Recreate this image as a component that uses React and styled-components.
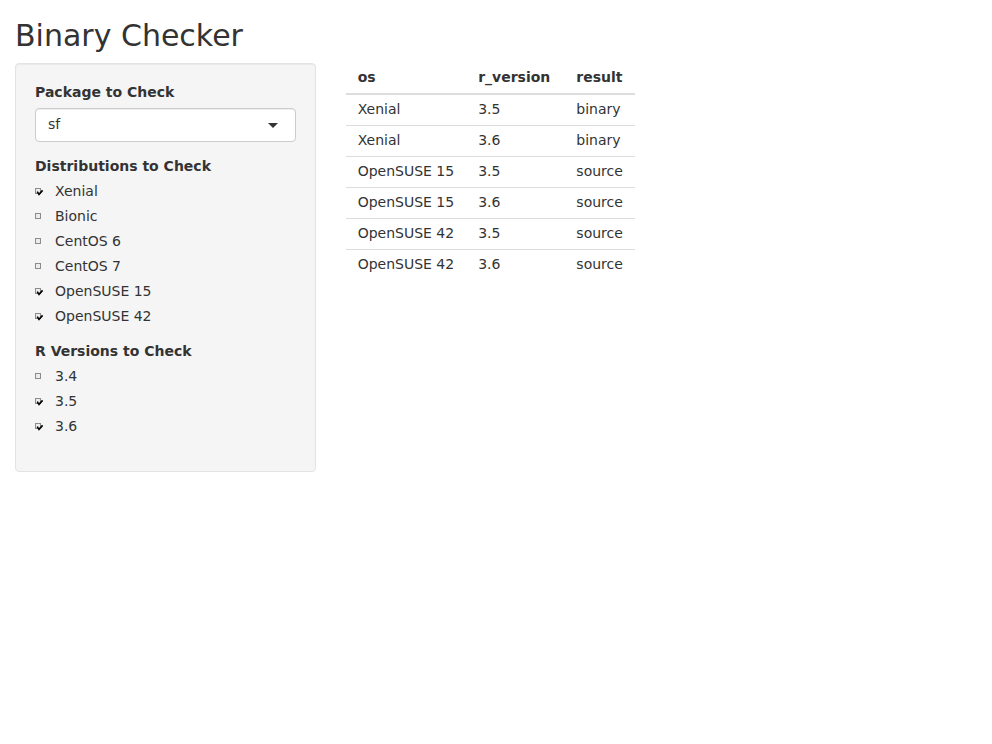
import styled, { createGlobalStyle } from "styled-components";

const GlobalStyle = createGlobalStyle`
  * {
    box-sizing: border-box;
  }
  body {
    margin: 0;
    font-family: "DejaVu Sans", sans-serif;
    font-size: 14px;
    line-height: 1.42857143;
    color: #333;
    background: #fff;
  }
`;

const Page = styled.div`
  padding: 0 15px;
`;

const Title = styled.h2`
  margin: 19px 0 11px;
  font-size: 30px;
  font-weight: 500;
  line-height: 1.1;
`;

const Row = styled.div`
  display: grid;
  grid-template-columns: 300.67px 1fr;
  gap: 30px;
  align-items: start;
`;

const Well = styled.div`
  background: #f5f5f5;
  border: 1px solid #e3e3e3;
  border-radius: 4px;
  box-shadow: inset 0 1px 1px rgba(0, 0, 0, 0.05);
  padding: 19px;
  margin-bottom: 20px;
`;

const FormGroup = styled.div`
  margin-bottom: 15px;
`;

const Label = styled.label`
  display: block;
  font-weight: 700;
  height: 20px;
  line-height: 18px;
  margin-bottom: 5px;
`;

const SelectBox = styled.div`
  position: relative;
  height: 34px;
  padding: 5px 12px 7px;
  background: #fff;
  border: 1px solid #ccc;
  border-radius: 4px;
  box-shadow: inset 0 1px 1px rgba(0, 0, 0, 0.075);
  &::after {
    content: "";
    position: absolute;
    right: 17px;
    top: 14px;
    border-style: solid;
    border-width: 5px 5px 0 5px;
    border-color: #333 transparent transparent transparent;
  }
`;

const Options = styled.div`
  display: flex;
  flex-direction: column;
  gap: 5px;
`;

const Option = styled.label`
  display: flex;
  align-items: flex-start;
  height: 20px;
  line-height: 18px;
`;

const Box = styled.span`
  display: inline-flex;
  width: 20px;
  height: 20px;
  padding-top: 6px;
`;

const Check = ({ checked }) => (
  <Box>
    <svg width="9" height="9" viewBox="0 0 9 9">
      <rect x="0.5" y="0.5" width="5" height="5" fill="#ececec" stroke="#8c8c8c" />
      {checked && (
        <path d="M2.2 3.6 L4 6.4 L7.6 2.4" fill="none" stroke="#000" strokeWidth="1.6" />
      )}
    </svg>
  </Box>
);

const Table = styled.table`
  border-collapse: collapse;
  border-spacing: 0;
`;

const Th = styled.th`
  text-align: left;
  font-weight: 700;
  padding: 4px ${(p) => (p.$wide ? 14 : 12)}px 6px 12px;
  border-bottom: 2px solid #ddd;
  white-space: nowrap;
`;

const Td = styled.td`
  padding: 4px 12px 6px;
  border-top: 1px solid ${(p) => (p.$first ? "transparent" : "#ddd")};
  white-space: nowrap;
`;

const distros = [
  { name: "Xenial", checked: true },
  { name: "Bionic", checked: false },
  { name: "CentOS 6", checked: false },
  { name: "CentOS 7", checked: false },
  { name: "OpenSUSE 15", checked: true },
  { name: "OpenSUSE 42", checked: true },
];

const versions = [
  { name: "3.4", checked: false },
  { name: "3.5", checked: true },
  { name: "3.6", checked: true },
];

const results = [
  ["Xenial", "3.5", "binary"],
  ["Xenial", "3.6", "binary"],
  ["OpenSUSE 15", "3.5", "source"],
  ["OpenSUSE 15", "3.6", "source"],
  ["OpenSUSE 42", "3.5", "source"],
  ["OpenSUSE 42", "3.6", "source"],
];

const CheckGroup = ({ label, items }) => (
  <FormGroup>
    <Label>{label}</Label>
    <Options>
      {items.map((item) => (
        <Option key={item.name}>
          <Check checked={item.checked} />
          {item.name}
        </Option>
      ))}
    </Options>
  </FormGroup>
);

export default function App() {
  return (
    <Page>
      <GlobalStyle />
      <Title>Binary Checker</Title>
      <Row>
        <Well>
          <FormGroup>
            <Label>Package to Check</Label>
            <SelectBox>sf</SelectBox>
          </FormGroup>
          <CheckGroup label="Distributions to Check" items={distros} />
          <CheckGroup label="R Versions to Check" items={versions} />
        </Well>
        <div>
          <Table>
            <thead>
              <tr>
                <Th>os</Th>
                <Th $wide>r_version</Th>
                <Th>result</Th>
              </tr>
            </thead>
            <tbody>
              {results.map((r, i) => (
                <tr key={i}>
                  {r.map((c, j) => (
                    <Td key={j} $first={i === 0}>
                      {c}
                    </Td>
                  ))}
                </tr>
              ))}
            </tbody>
          </Table>
        </div>
      </Row>
    </Page>
  );
}
